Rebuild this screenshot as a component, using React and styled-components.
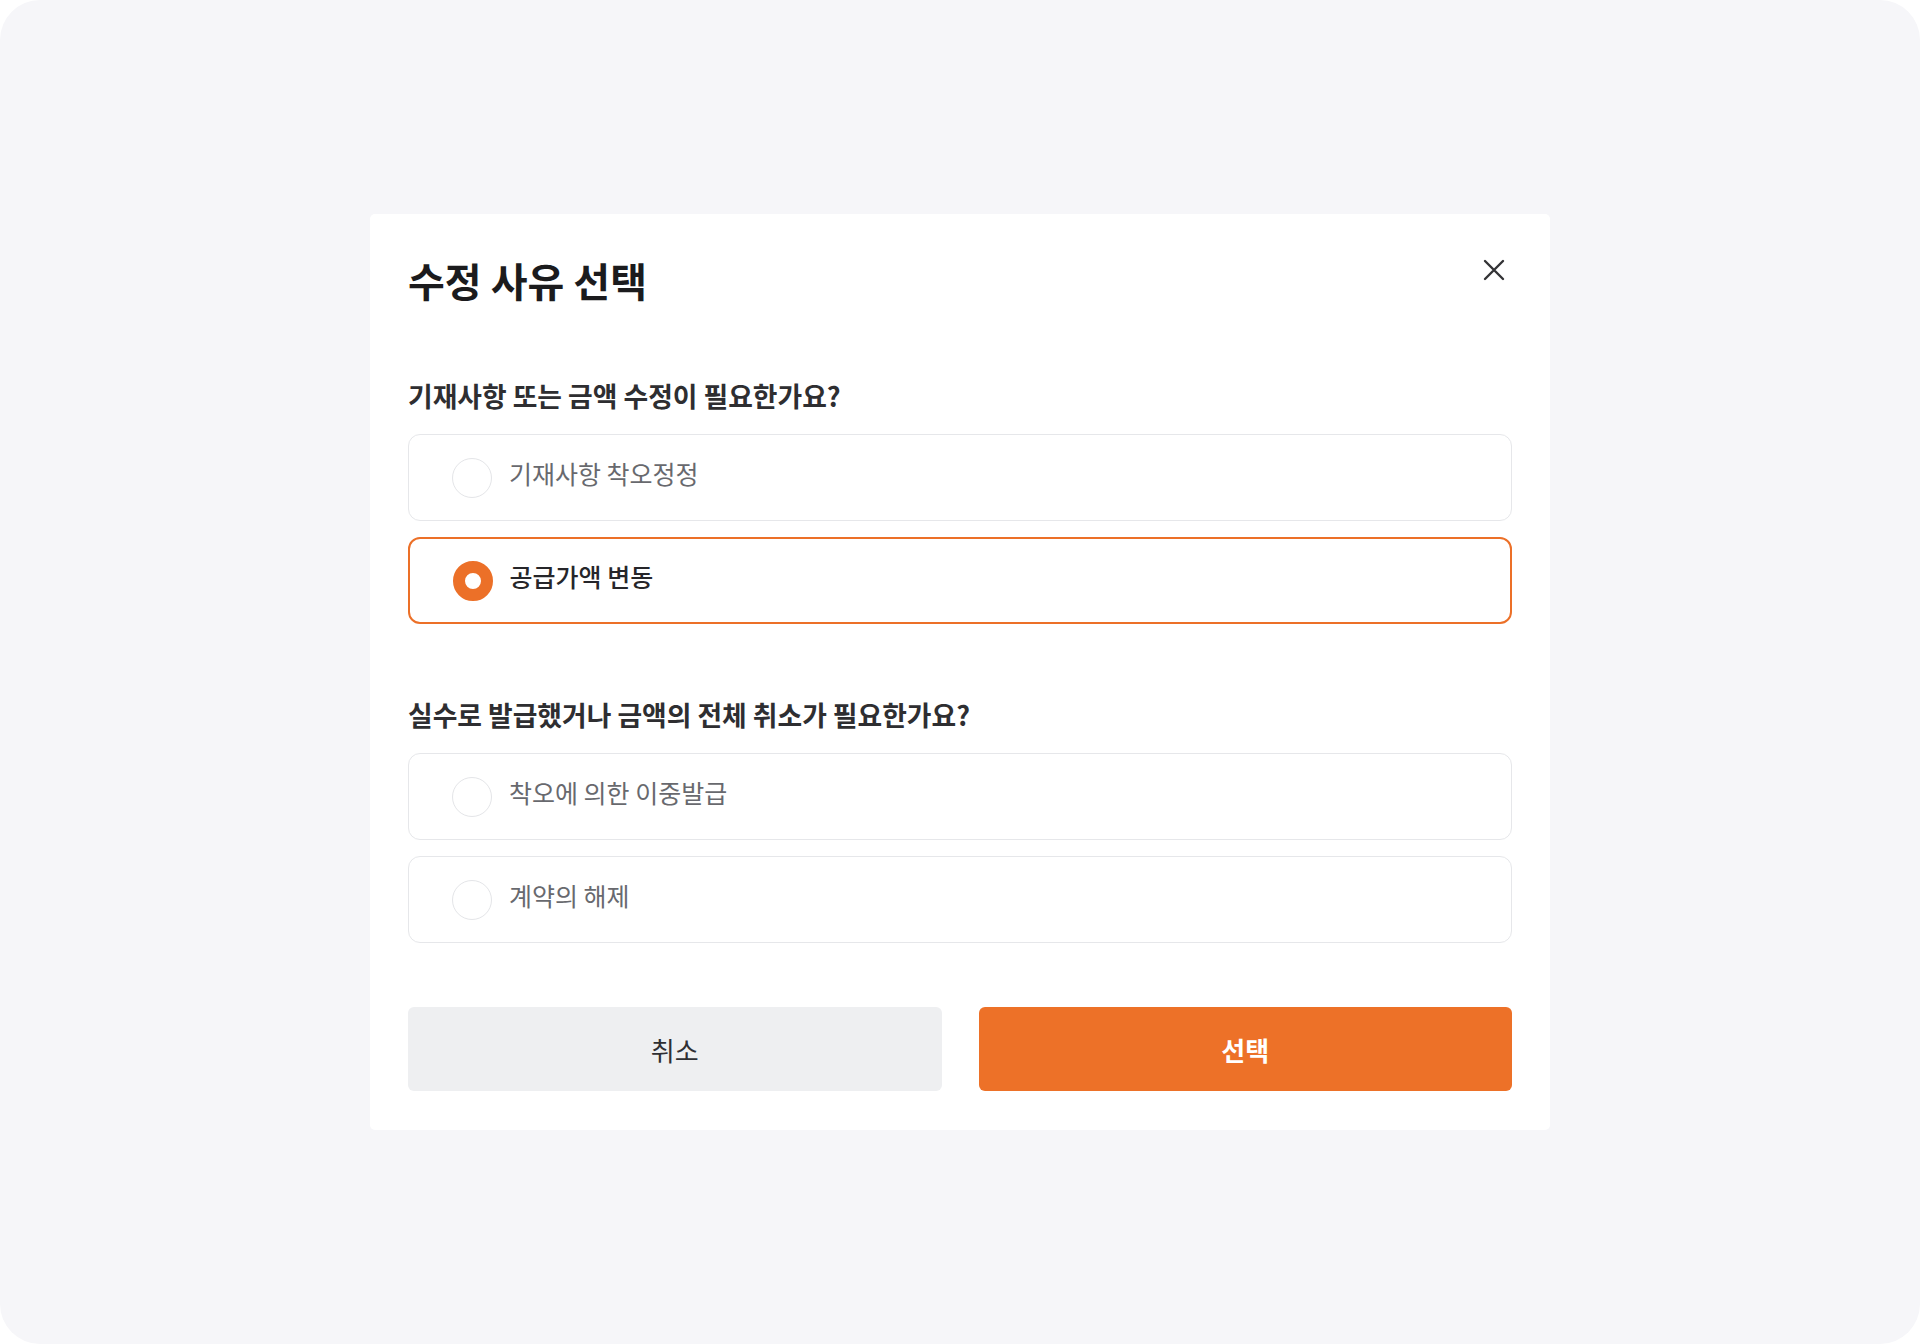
import React, { useState } from 'react';
import styled, { createGlobalStyle } from 'styled-components';

const GlobalStyle = createGlobalStyle`
    html, body {
        margin: 0;
        padding: 0;
        background: #ffffff;
    }
    body {
        font-family: "Noto Sans CJK KR", "Noto Sans", sans-serif;
    }
    * {
        box-sizing: border-box;
    }
`;

const Page = styled.div`
    width: 1920px;
    height: 1344px;
    background: #f6f6f9;
    border-radius: 40px;
    display: flex;
    align-items: center;
    justify-content: center;
`;

const Modal = styled.div`
    width: 1180px;
    background: #ffffff;
    border-radius: 5px;
    padding: 38px 38px 39px;
    display: flex;
    flex-direction: column;
`;

const Header = styled.div`
    display: flex;
    justify-content: space-between;
    align-items: flex-start;
    height: 58px;
`;

const Title = styled.h1`
    margin: 0;
    font-size: 40px;
    line-height: 56px;
    font-weight: 700;
    color: #1b1b1d;
`;

const CloseButton = styled.button`
    width: 36px;
    height: 36px;
    border: none;
    background: none;
    padding: 0;
    display: flex;
    align-items: center;
    justify-content: center;
    cursor: pointer;
    color: #333336;
`;

const Section = styled.section`
    display: flex;
    flex-direction: column;
    gap: 16px;
    margin-top: ${p => p.$top}px;
`;

const Question = styled.h2`
    margin: 0 0 4px;
    font-size: 26.8px;
    line-height: 36px;
    font-weight: 700;
    color: #2e2e31;
`;

const Option = styled.label`
    height: 87px;
    display: flex;
    align-items: center;
    gap: 17px;
    padding-left: 43px;
    border: ${p => (p.$selected ? '2px solid #ec7028' : '1.5px solid #e6e7ea')};
    border-radius: 12px;
    background: #ffffff;
    cursor: pointer;
`;

const Radio = styled.span`
    width: 40px;
    height: 40px;
    flex: none;
    border-radius: 50%;
    background: #ffffff;
    border: ${p => (p.$selected ? '12px solid #ec7028' : '1.5px solid #e4e5e8')};
    margin-left: ${p => (p.$selected ? '-0.5px' : '0')};
`;

const OptionLabel = styled.span`
    font-size: 25px;
    line-height: 34px;
    margin-top: -9px;
    font-weight: ${p => (p.$selected ? 500 : 400)};
    color: ${p => (p.$selected ? '#26262a' : '#68696e')};
`;

const Actions = styled.div`
    display: grid;
    grid-template-columns: 1fr 1fr;
    gap: 37px;
    margin-top: 64px;
`;

const ActionButton = styled.button`
    height: 84px;
    border: none;
    border-radius: 6px;
    font-family: inherit;
    font-size: 26px;
    font-weight: ${p => (p.$primary ? 700 : 400)};
    background: ${p => (p.$primary ? '#ed7128' : '#eeeff1')};
    color: ${p => (p.$primary ? '#ffffff' : '#2f2f33')};
    cursor: pointer;
`;

const groups = [
    {
        question: '기재사항 또는 금액 수정이 필요한가요?',
        top: 68,
        options: ['기재사항 착오정정', '공급가액 변동'],
    },
    {
        question: '실수로 발급했거나 금액의 전체 취소가 필요한가요?',
        top: 73,
        options: ['착오에 의한 이중발급', '계약의 해제'],
    },
];

const CloseIcon = () => (
    <svg width="22" height="22" viewBox="0 0 22 22" fill="none">
        <path d="M2 2L20 20M20 2L2 20" stroke="currentColor" strokeWidth="2.4" strokeLinecap="round" />
    </svg>
);

export default function App() {
    const [selected, setSelected] = useState('공급가액 변동');

    return (
        <>
            <GlobalStyle />
            <Page>
                <Modal>
                    <Header>
                        <Title>수정 사유 선택</Title>
                        <CloseButton aria-label="닫기">
                            <CloseIcon />
                        </CloseButton>
                    </Header>

                    {groups.map(group => (
                        <Section key={group.question} $top={group.top}>
                            <Question>{group.question}</Question>
                            {group.options.map(opt => {
                                const isSel = opt === selected;
                                return (
                                    <Option key={opt} $selected={isSel} onClick={() => setSelected(opt)}>
                                        <Radio $selected={isSel} />
                                        <OptionLabel $selected={isSel}>{opt}</OptionLabel>
                                    </Option>
                                );
                            })}
                        </Section>
                    ))}

                    <Actions>
                        <ActionButton>취소</ActionButton>
                        <ActionButton $primary>선택</ActionButton>
                    </Actions>
                </Modal>
            </Page>
        </>
    );
}
